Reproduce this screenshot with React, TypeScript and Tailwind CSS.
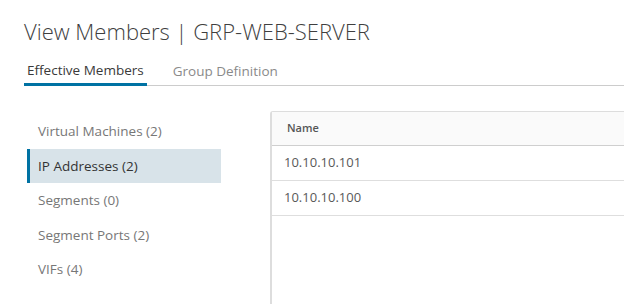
const navItems = [
  { label: "Virtual Machines (2)", active: false },
  { label: "IP Addresses (2)", active: true },
  { label: "Segments (0)", active: false },
  { label: "Segment Ports (2)", active: false },
  { label: "VIFs (4)", active: false },
];

const rows = ["10.10.10.101", "10.10.10.100"];

const App = () => {
  return (
    <div
      className="h-[304px] w-[624px] overflow-hidden bg-white pl-[24px]"
      style={{ fontFamily: "'Open Sans', 'Noto Sans', sans-serif" }}
    >
      <h1 className="pt-[17px] text-[22px] font-light leading-[28px] text-[#3f3f3f]">
        View Members | GRP-WEB-SERVER
      </h1>

      <div className="mt-[13px] flex h-[28px] gap-[23px] border-b border-[#cccccc]">
        <button className="-mb-px flex items-center border-b-[3px] border-[#0072a3] px-[3px] text-[13.5px] text-[#3a3a3a]">
          Effective Members
        </button>
        <button className="flex items-center px-[3px] text-[13.5px] text-[#8a8a8a]">
          Group Definition
        </button>
      </div>

      <div className="mt-[25px] flex gap-[49px]">
        <ul className="ml-[3px] w-[194px] pt-[3px]">
          {navItems.map((item) => (
            <li
              key={item.label}
              className={
                item.active
                  ? "flex h-[34.5px] items-center border-l-[3px] border-[#0072a3] bg-[#d8e3e9] pl-[8px] text-[13.5px] text-[#333333]"
                  : "flex h-[34.5px] items-center pl-[11px] text-[13.5px] text-[#777777]"
              }
            >
              {item.label}
            </li>
          ))}
        </ul>

        <div className="h-[200px] flex-1 rounded-tl-[3px] border-l-2 border-t border-[#dddddd]">
          <div className="flex h-[34px] items-center border-b border-[#cfcfcf] bg-[#fafafa] pl-[15px] text-[11px] font-semibold text-[#565656]">
            Name
          </div>
          {rows.map((ip) => (
            <div
              key={ip}
              className="flex h-[35px] items-center border-b border-[#dedede] pl-[12px] text-[13px] text-[#595959]"
            >
              {ip}
            </div>
          ))}
        </div>
      </div>
    </div>
  );
};

export default App;
